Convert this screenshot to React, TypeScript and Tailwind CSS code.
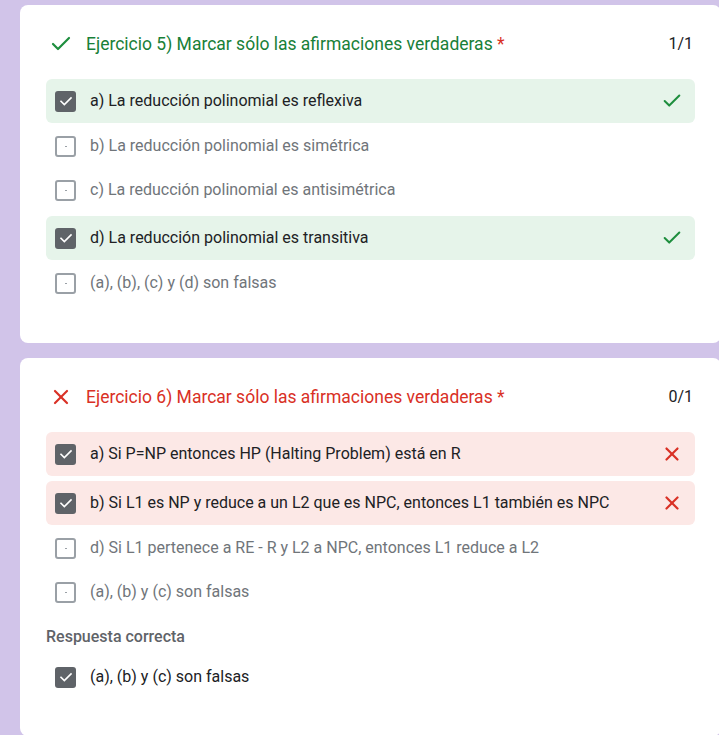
import { Check, X } from "lucide-react"

type Opt = {
  label: string
  checked?: boolean
  state?: "ok" | "bad"
}

const ej5: Opt[] = [
  { label: "a) La reducción polinomial es reflexiva", checked: true, state: "ok" },
  { label: "b) La reducción polinomial es simétrica" },
  { label: "c) La reducción polinomial es antisimétrica" },
  { label: "d) La reducción polinomial es transitiva", checked: true, state: "ok" },
  { label: "(a), (b), (c) y (d) son falsas" },
]

const ej6: Opt[] = [
  { label: "a) Si P=NP entonces HP (Halting Problem) está en R", checked: true, state: "bad" },
  { label: "b) Si L1 es NP y reduce a un L2 que es NPC, entonces L1 también es NPC", checked: true, state: "bad" },
  { label: "d) Si L1 pertenece a RE - R y L2 a NPC, entonces L1 reduce a L2" },
  { label: "(a), (b) y (c) son falsas" },
]

function Box({ checked }: { checked?: boolean }) {
  if (checked) {
    return (
      <div className="w-[21px] h-[21px] rounded-[3px] bg-[#5f6368] flex items-center justify-center shrink-0">
        <svg width="16" height="16" viewBox="0 0 24 24" fill="none" stroke="white" strokeWidth="2.4" strokeLinecap="square">
          <path d="M4.5 12.5l5 5 10-10" />
        </svg>
      </div>
    )
  }
  return (
    <div className="w-[21px] h-[21px] rounded-[3px] border-2 border-[#9aa0a6] flex items-center justify-center shrink-0">
      <div className="w-[2px] h-[1px] bg-[#9aa0a6]" />
    </div>
  )
}

function Row({ opt }: { opt: Opt }) {
  const hl = opt.state === "ok" ? "bg-[#e6f4ea]" : opt.state === "bad" ? "bg-[#fce8e6]" : ""
  return (
    <div
      className={`h-[44px] flex items-center pl-[9px] pr-[12px] rounded-[6px] ${hl} ${
        opt.state ? "mt-[4px] mb-[1px]" : ""
      }`}
    >
      <Box checked={opt.checked} />
      <span className={`ml-[14px] text-[16px] flex-1 ${opt.checked ? "text-[#202124]" : "text-[#70757a]"}`}>
        {opt.label}
      </span>
      {opt.state === "ok" && <Check className="w-[22px] h-[22px] text-[#1e8e3e]" strokeWidth={2.2} />}
      {opt.state === "bad" && <X className="w-[22px] h-[22px] text-[#d93025]" strokeWidth={2.4} />}
    </div>
  )
}

function Card({
  ok,
  title,
  score,
  options,
  children,
  pb,
}: {
  ok: boolean
  title: string
  score: string
  options: Opt[]
  children?: React.ReactNode
  pb: string
}) {
  return (
    <div className={`w-[701px] bg-white rounded-[8px] pt-[27px] px-[26px] flex flex-col ${pb}`}>
      <div className="h-[24px] flex items-center">
        <div className="w-[40px] flex items-center pl-[3px]">
          {ok ? (
            <Check className="w-[24px] h-[24px] text-[#1e8e3e]" strokeWidth={2.2} />
          ) : (
            <X className="w-[24px] h-[24px] text-[#d93025]" strokeWidth={2.2} />
          )}
        </div>
        <span className={`text-[17.5px] flex-1 ${ok ? "text-[#188038]" : "text-[#d93025]"}`}>
          {title} <span className="text-[#d93025]">*</span>
        </span>
        <span className="text-[16px] text-[#202124] pr-[2px]">{score}</span>
      </div>
      <div className="mt-[19px] flex flex-col">
        {options.map((o) => (
          <Row key={o.label} opt={o} />
        ))}
      </div>
      {children}
    </div>
  )
}

export default function App() {
  return (
    <div
      className="w-full h-[735px] overflow-hidden bg-[#d1c4e9] pl-[20px] pt-[5px] flex flex-col"
      style={{ fontFamily: "Roboto, 'Liberation Sans', sans-serif" }}
    >
      <Card ok title="Ejercicio 5) Marcar sólo las afirmaciones verdaderas" score="1/1" options={ej5} pb="pb-[38px]" />
      <div className="h-[15px] shrink-0" />
      <Card ok={false} title="Ejercicio 6) Marcar sólo las afirmaciones verdaderas" score="0/1" options={ej6} pb="pb-[37px]">
        <div className="mt-[13px] text-[16px] font-medium text-[#5f6368] leading-[20px]">Respuesta correcta</div>
        <div className="mt-[8px] flex flex-col">
          <Row opt={{ label: "(a), (b) y (c) son falsas", checked: true }} />
        </div>
      </Card>
    </div>
  )
}
